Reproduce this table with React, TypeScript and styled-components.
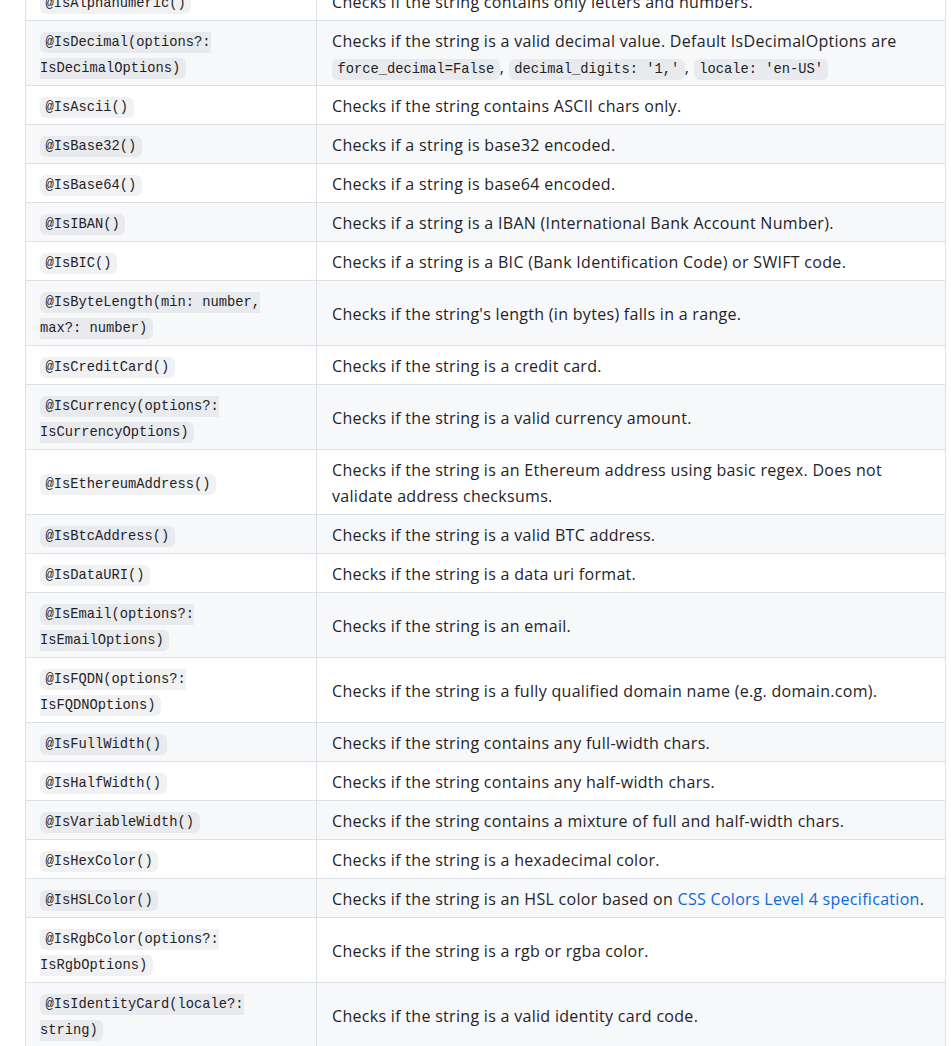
import React from 'react';
import styled, { createGlobalStyle } from 'styled-components';

const GlobalStyle = createGlobalStyle`
  html, body {
    margin: 0;
    padding: 0;
    background: #ffffff;
  }
  body {
    font-family: "Open Sans", "Liberation Sans", sans-serif;
    color: #1f2328;
    overflow: hidden;
  }
`;

const Page = styled.div`
  padding-left: 25px;
  margin-top: -19px;
`;

const Table = styled.table`
  width: 921px;
  border-collapse: collapse;
  border-spacing: 0;
  table-layout: fixed;
  font-size: 16px;
  line-height: 26px;
`;

const Row = styled.tr<{ $striped: boolean }>`
  background-color: ${({ $striped }) => ($striped ? '#f6f8fa' : '#ffffff')};
  border-top: 1px solid #dde1e6;
`;

const SigCell = styled.td`
  padding: 6px 13px 6px 14px;
  border: 1px solid #dde1e6;
  vertical-align: middle;
`;

const DescCell = styled.td`
  padding: 7px 13px 5px 15px;
  border: 1px solid #dde1e6;
  vertical-align: middle;
  letter-spacing: 0.3px;
`;

const Code = styled.code`
  font-family: "Liberation Mono", "DejaVu Sans Mono", monospace;
  font-size: 13.75px;
  line-height: 1;
  letter-spacing: 0;
  padding: 0.2em 0.4em;
  margin: 0;
  border-radius: 6px;
  background-color: rgba(129, 139, 152, 0.12);
  white-space: normal;
`;

const Link = styled.a`
  color: #0969da;
  text-decoration: none;
`;

type Item = { sig: string; desc: React.ReactNode };

const items: Item[] = [
  { sig: '@IsAlphanumeric()', desc: 'Checks if the string contains only letters and numbers.' },
  {
    sig: '@IsDecimal(options?: IsDecimalOptions)',
    desc: (
      <>
        Checks if the string is a valid decimal value. Default IsDecimalOptions are{' '}
        <Code>force_decimal=False</Code>, <Code>decimal_digits: '1,'</Code>, <Code>locale: 'en-US'</Code>
      </>
    ),
  },
  { sig: '@IsAscii()', desc: 'Checks if the string contains ASCII chars only.' },
  { sig: '@IsBase32()', desc: 'Checks if a string is base32 encoded.' },
  { sig: '@IsBase64()', desc: 'Checks if a string is base64 encoded.' },
  { sig: '@IsIBAN()', desc: 'Checks if a string is a IBAN (International Bank Account Number).' },
  { sig: '@IsBIC()', desc: 'Checks if a string is a BIC (Bank Identification Code) or SWIFT code.' },
  { sig: '@IsByteLength(min: number, max?: number)', desc: "Checks if the string's length (in bytes) falls in a range." },
  { sig: '@IsCreditCard()', desc: 'Checks if the string is a credit card.' },
  { sig: '@IsCurrency(options?: IsCurrencyOptions)', desc: 'Checks if the string is a valid currency amount.' },
  {
    sig: '@IsEthereumAddress()',
    desc: 'Checks if the string is an Ethereum address using basic regex. Does not validate address checksums.',
  },
  { sig: '@IsBtcAddress()', desc: 'Checks if the string is a valid BTC address.' },
  { sig: '@IsDataURI()', desc: 'Checks if the string is a data uri format.' },
  { sig: '@IsEmail(options?: IsEmailOptions)', desc: 'Checks if the string is an email.' },
  { sig: '@IsFQDN(options?: IsFQDNOptions)', desc: 'Checks if the string is a fully qualified domain name (e.g. domain.com).' },
  { sig: '@IsFullWidth()', desc: 'Checks if the string contains any full-width chars.' },
  { sig: '@IsHalfWidth()', desc: 'Checks if the string contains any half-width chars.' },
  { sig: '@IsVariableWidth()', desc: 'Checks if the string contains a mixture of full and half-width chars.' },
  { sig: '@IsHexColor()', desc: 'Checks if the string is a hexadecimal color.' },
  {
    sig: '@IsHSLColor()',
    desc: (
      <>
        Checks if the string is an HSL color based on <Link href="#">CSS Colors Level 4 specification</Link>.
      </>
    ),
  },
  { sig: '@IsRgbColor(options?: IsRgbOptions)', desc: 'Checks if the string is a rgb or rgba color.' },
  { sig: '@IsIdentityCard(locale?: string)', desc: 'Checks if the string is a valid identity card code.' },
];

const App = () => {
  return (
    <Page>
      <GlobalStyle />
      <Table>
        <colgroup>
          <col style={{ width: 291 }} />
          <col />
        </colgroup>
        <tbody>
          {items.map((item, index) => (
            <Row key={item.sig} $striped={index % 2 === 1}>
              <SigCell>
                <Code>{item.sig}</Code>
              </SigCell>
              <DescCell>{item.desc}</DescCell>
            </Row>
          ))}
        </tbody>
      </Table>
    </Page>
  );
};

export default App;
